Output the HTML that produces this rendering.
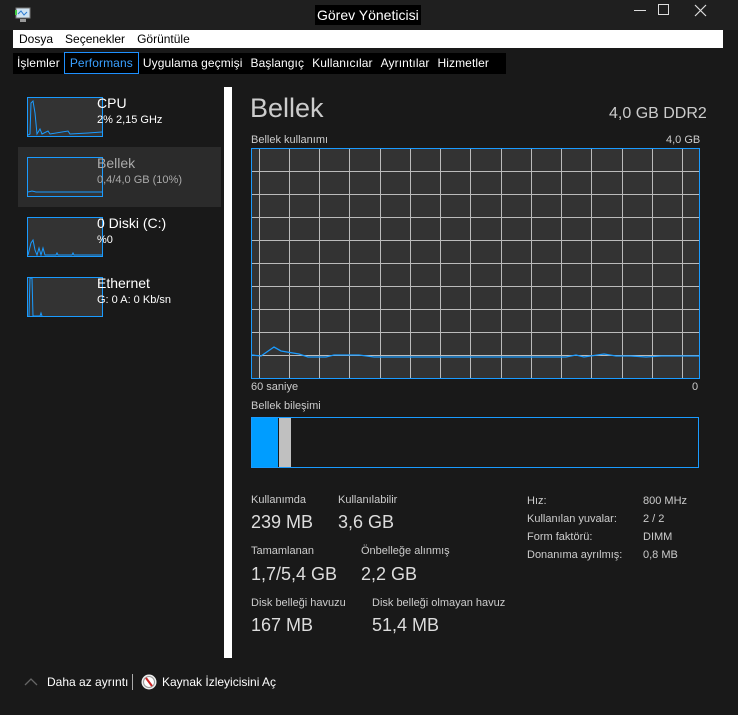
<!DOCTYPE html>
<html><head><meta charset="utf-8"><style>
*{margin:0;padding:0;box-sizing:border-box}
body{width:738px;height:715px;background:#191919;font-family:"Segoe UI","Liberation Sans",sans-serif;color:#ddd;position:relative;overflow:hidden}
.a{position:absolute;white-space:nowrap}
.tb{left:0;top:0;width:738px;height:30px;background:#1f1f1f}
.menu{left:13px;top:30px;width:710px;height:18px;background:#fff;color:#000;font-size:12px}
.menu span{margin-left:6px;margin-right:6px;line-height:18px}
.tabs{left:13px;top:53px;width:493px;height:21px;background:#000;font-size:12px;color:#fff}
.tabs span{display:inline-block;padding:0 4px;line-height:21px;letter-spacing:0.1px}
.sel{border:1px solid #1e90ff;color:#3aa0ff;line-height:20px!important;margin-top:-2px;padding:0 5px!important}
.th{width:76px;height:40px;border:1px solid #1a9bff;background:#333}
.lbl{font-size:14px;color:#fff}
.sub{font-size:11px;color:#fff}
.s{font-size:11px;color:#ccc}
.big{font-size:18px;color:#ddd}
</style></head><body>
<div class="a tb"></div>
<svg class="a" style="left:14px;top:7px" width="18" height="16"><rect x="2" y="1" width="14" height="10" fill="#cfe3f2" stroke="#777"/><polyline points="4,7 7,4 10,8 13,5" stroke="#2a7ad0" fill="none"/><rect x="6" y="12" width="6" height="3" fill="#999"/><rect x="1" y="3" width="2" height="5" fill="#4c4"/></svg>
<div class="a" style="left:315px;top:5px;background:#000;color:#fff;font-size:14px;padding:0 2px;line-height:20px">Görev Yöneticisi</div>
<div class="a" style="left:634px;top:10px;width:12px;height:1px;background:#ddd"></div>
<div class="a" style="left:658px;top:4px;width:11px;height:11px;border:1px solid #ddd"></div>
<svg class="a" style="left:694px;top:4px" width="13" height="13"><path d="M1 1L12 12M12 1L1 12" stroke="#ddd" stroke-width="1.2"/></svg>
<div class="a menu"><span>Dosya</span><span>Seçenekler</span><span>Görüntüle</span></div>
<div class="a tabs"><span>İşlemler</span><span class="sel">Performans</span><span>Uygulama geçmişi</span><span>Başlangıç</span><span>Kullanıcılar</span><span>Ayrıntılar</span><span>Hizmetler</span></div>

<div class="a" style="left:18px;top:147px;width:203px;height:60px;background:#2b2b2b"></div>
<div class="a th" style="left:27px;top:97px"><svg width="74" height="38"><polyline points="0,37 2,36 3,5 5,3 7,15 9,36 12,31 14,36 20,33 22,36 40,33 42,36 60,35 74,34" stroke="#1a9bff" fill="none"/></svg></div>
<div class="a lbl" style="left:97px;top:95px">CPU</div><div class="a sub" style="left:97px;top:114px">2% 2,15 GHz</div>
<div class="a th" style="left:27px;top:157px"><svg width="74" height="38"><polyline points="0,34 4,33 8,34 74,34" stroke="#1a9bff" fill="none"/></svg></div>
<div class="a lbl" style="left:97px;top:155px;color:#aaa">Bellek</div><div class="a sub" style="left:97px;top:174px;color:#aaa">0,4/4,0 GB (10%)</div>
<div class="a th" style="left:27px;top:217px"><svg width="74" height="38"><polyline points="0,37 3,25 5,22 7,32 9,37 11,30 13,37 15,30 17,37 28,37 29,35 30,37 44,37 45,35 46,37 74,37" stroke="#1a9bff" fill="none"/></svg></div>
<div class="a lbl" style="left:97px;top:215px">0 Diski (C:)</div><div class="a sub" style="left:97px;top:234px">%0</div>
<div class="a th" style="left:27px;top:277px"><svg width="74" height="38"><polyline points="1,38 2,0 4,0 5,38 12,38 13,35 14,38" stroke="#1a9bff" fill="none"/></svg></div>
<div class="a lbl" style="left:97px;top:275px">Ethernet</div><div class="a sub" style="left:97px;top:294px">G: 0 A: 0 Kb/sn</div>

<div class="a" style="left:224px;top:87px;width:8px;height:571px;background:#fff"></div>

<div class="a" style="left:250px;top:93px;font-size:27px;color:#ccc">Bellek</div>
<div class="a" style="left:609px;top:105px;font-size:16px;color:#ccc">4,0 GB DDR2</div>
<div class="a s" style="left:251px;top:134px">Bellek kullanımı</div>
<div class="a s" style="left:666px;top:134px">4,0 GB</div>
<svg class="a" style="left:251px;top:148px" width="449" height="231">
<rect x="0.5" y="0.5" width="448" height="230" fill="#333"/>
<g stroke="#bbb" stroke-width="1">
<path d="M8.5 1V230M38.5 1V230M68.5 1V230M98.5 1V230M129.5 1V230M159.5 1V230M189.5 1V230M219.5 1V230M250.5 1V230M280.5 1V230M310.5 1V230M340.5 1V230M371.5 1V230M401.5 1V230M431.5 1V230"/>
<path d="M1 23.5H448M1 46.5H448M1 69.5H448M1 92.5H448M1 115.5H448M1 138.5H448M1 161.5H448M1 184.5H448M1 207.5H448"/>
</g>
<polyline points="1,207 10,208 23,199 30,203 48,206 57,209 75,209 83,207 108,207 123,209 315,209 325,207 333,209 353,206 365,208 380,208 395,209 410,208 448,208" stroke="#1a9bff" fill="none" stroke-width="1.3"/>
<rect x="0.5" y="0.5" width="448" height="230" fill="none" stroke="#1a9bff"/>
</svg>
<div class="a s" style="left:251px;top:381px">60 saniye</div>
<div class="a s" style="left:692px;top:381px">0</div>
<div class="a s" style="left:251px;top:400px">Bellek bileşimi</div>
<div class="a" style="left:251px;top:417px;width:448px;height:51px;border:1px solid #1a9bff;background:#191919"></div>
<div class="a" style="left:252px;top:418px;width:26px;height:49px;background:#009dff"></div>
<div class="a" style="left:279px;top:418px;width:12px;height:49px;background:#c0c0c0"></div>

<div class="a s" style="left:251px;top:494px">Kullanımda</div>
<div class="a s" style="left:338px;top:494px">Kullanılabilir</div>
<div class="a big" style="left:251px;top:512px">239 MB</div>
<div class="a big" style="left:338px;top:512px">3,6 GB</div>
<div class="a s" style="left:251px;top:545px">Tamamlanan</div>
<div class="a s" style="left:361px;top:545px">Önbelleğe alınmış</div>
<div class="a big" style="left:251px;top:564px">1,7/5,4 GB</div>
<div class="a big" style="left:361px;top:564px">2,2 GB</div>
<div class="a s" style="left:251px;top:597px">Disk belleği havuzu</div>
<div class="a s" style="left:372px;top:597px">Disk belleği olmayan havuz</div>
<div class="a big" style="left:251px;top:615px">167 MB</div>
<div class="a big" style="left:372px;top:615px">51,4 MB</div>

<div class="a s" style="left:527px;top:492px;line-height:18px">Hız:<br>Kullanılan yuvalar:<br>Form faktörü:<br>Donanıma ayrılmış:</div>
<div class="a s" style="left:643px;top:492px;line-height:18px">800 MHz<br>2 / 2<br>DIMM<br>0,8 MB</div>

<svg class="a" style="left:24px;top:677px" width="14" height="9"><path d="M1 8L7 2L13 8" stroke="#666" fill="none" stroke-width="1.3"/></svg>
<div class="a" style="left:47px;top:675px;font-size:12px;color:#fff">Daha az ayrıntı</div>
<div class="a" style="left:132px;top:674px;width:1px;height:16px;background:#aaa"></div>
<svg class="a" style="left:141px;top:674px" width="16" height="16"><circle cx="8" cy="8" r="7.5" fill="#eee"/><circle cx="8" cy="8" r="5.5" fill="#fff" stroke="#999"/><path d="M5 4L11 12" stroke="#c22" stroke-width="2"/></svg>
<div class="a" style="left:162px;top:675px;font-size:12px;color:#fff">Kaynak İzleyicisini Aç</div>
</body></html>
